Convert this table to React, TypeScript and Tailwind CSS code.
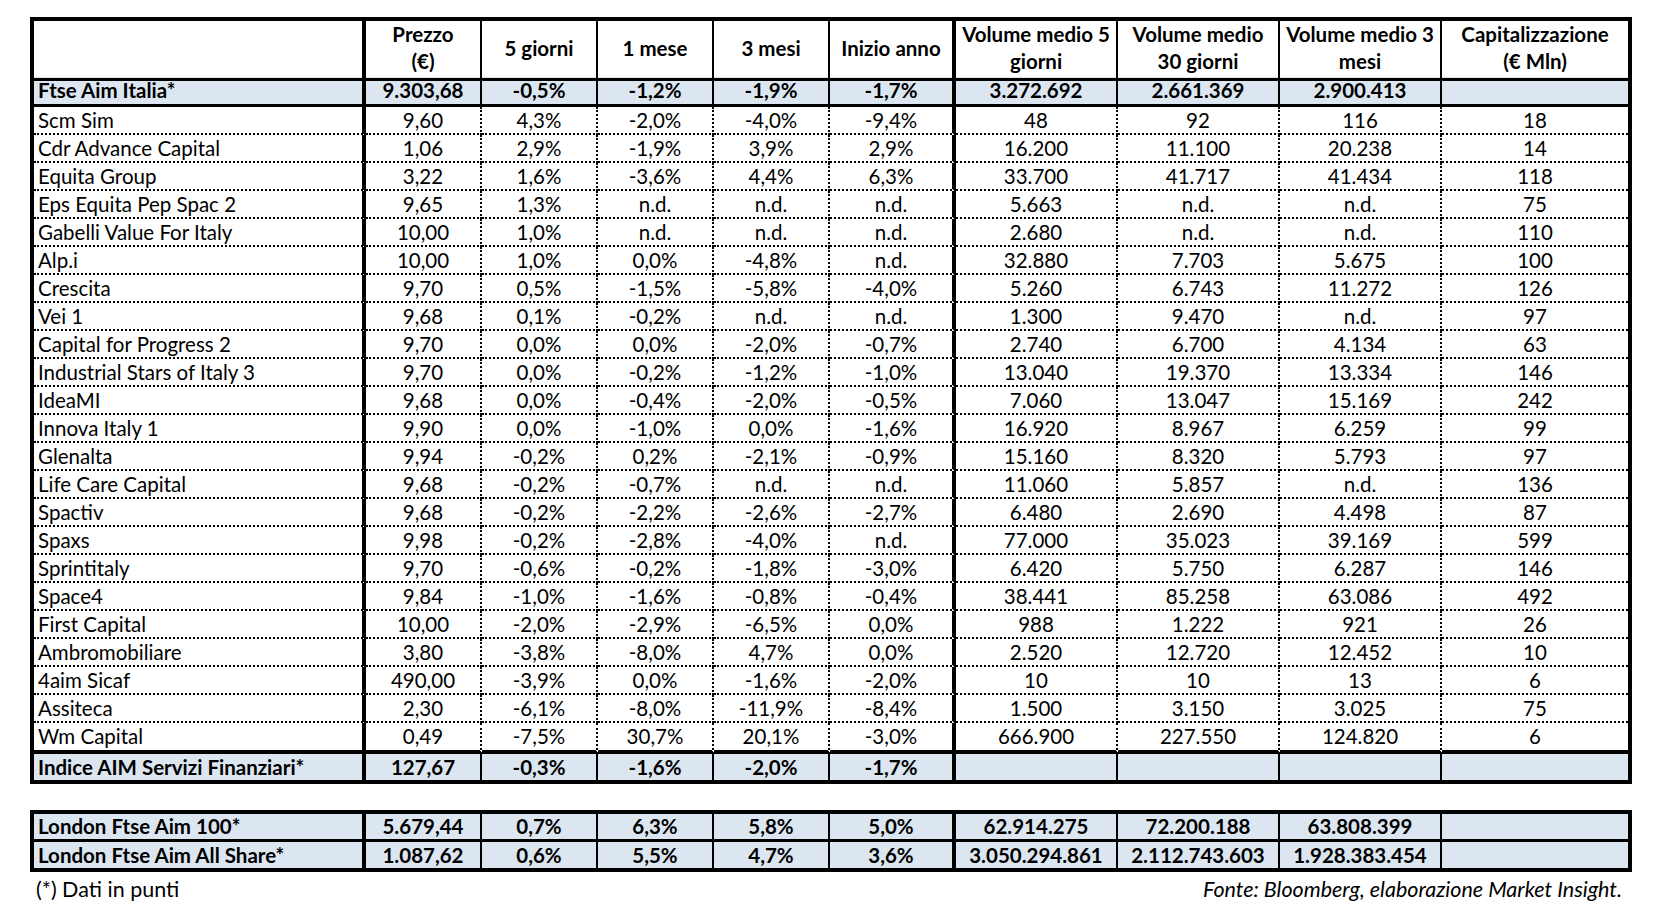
const COLS = 'grid grid-cols-[332px_116px_116px_116px_116px_126px_162px_162px_162px_186px]';

const header = [
    '',
    'Prezzo\n(€)',
    '5 giorni',
    '1 mese',
    '3 mesi',
    'Inizio anno',
    'Volume medio 5\ngiorni',
    'Volume medio\n30 giorni',
    'Volume medio 3\nmesi',
    'Capitalizzazione\n(€ Mln)',
];

const ftse = ['Ftse Aim Italia*', '9.303,68', '-0,5%', '-1,2%', '-1,9%', '-1,7%', '3.272.692', '2.661.369', '2.900.413', ''];

const rows = [
    ['Scm Sim', '9,60', '4,3%', '-2,0%', '-4,0%', '-9,4%', '48', '92', '116', '18'],
    ['Cdr Advance Capital', '1,06', '2,9%', '-1,9%', '3,9%', '2,9%', '16.200', '11.100', '20.238', '14'],
    ['Equita Group', '3,22', '1,6%', '-3,6%', '4,4%', '6,3%', '33.700', '41.717', '41.434', '118'],
    ['Eps Equita Pep Spac 2', '9,65', '1,3%', 'n.d.', 'n.d.', 'n.d.', '5.663', 'n.d.', 'n.d.', '75'],
    ['Gabelli Value For Italy', '10,00', '1,0%', 'n.d.', 'n.d.', 'n.d.', '2.680', 'n.d.', 'n.d.', '110'],
    ['Alp.i', '10,00', '1,0%', '0,0%', '-4,8%', 'n.d.', '32.880', '7.703', '5.675', '100'],
    ['Crescita', '9,70', '0,5%', '-1,5%', '-5,8%', '-4,0%', '5.260', '6.743', '11.272', '126'],
    ['Vei 1', '9,68', '0,1%', '-0,2%', 'n.d.', 'n.d.', '1.300', '9.470', 'n.d.', '97'],
    ['Capital for Progress 2', '9,70', '0,0%', '0,0%', '-2,0%', '-0,7%', '2.740', '6.700', '4.134', '63'],
    ['Industrial Stars of Italy 3', '9,70', '0,0%', '-0,2%', '-1,2%', '-1,0%', '13.040', '19.370', '13.334', '146'],
    ['IdeaMI', '9,68', '0,0%', '-0,4%', '-2,0%', '-0,5%', '7.060', '13.047', '15.169', '242'],
    ['Innova Italy 1', '9,90', '0,0%', '-1,0%', '0,0%', '-1,6%', '16.920', '8.967', '6.259', '99'],
    ['Glenalta', '9,94', '-0,2%', '0,2%', '-2,1%', '-0,9%', '15.160', '8.320', '5.793', '97'],
    ['Life Care Capital', '9,68', '-0,2%', '-0,7%', 'n.d.', 'n.d.', '11.060', '5.857', 'n.d.', '136'],
    ['Spactiv', '9,68', '-0,2%', '-2,2%', '-2,6%', '-2,7%', '6.480', '2.690', '4.498', '87'],
    ['Spaxs', '9,98', '-0,2%', '-2,8%', '-4,0%', 'n.d.', '77.000', '35.023', '39.169', '599'],
    ['Sprintitaly', '9,70', '-0,6%', '-0,2%', '-1,8%', '-3,0%', '6.420', '5.750', '6.287', '146'],
    ['Space4', '9,84', '-1,0%', '-1,6%', '-0,8%', '-0,4%', '38.441', '85.258', '63.086', '492'],
    ['First Capital', '10,00', '-2,0%', '-2,9%', '-6,5%', '0,0%', '988', '1.222', '921', '26'],
    ['Ambromobiliare', '3,80', '-3,8%', '-8,0%', '4,7%', '0,0%', '2.520', '12.720', '12.452', '10'],
    ['4aim Sicaf', '490,00', '-3,9%', '0,0%', '-1,6%', '-2,0%', '10', '10', '13', '6'],
    ['Assiteca', '2,30', '-6,1%', '-8,0%', '-11,9%', '-8,4%', '1.500', '3.150', '3.025', '75'],
    ['Wm Capital', '0,49', '-7,5%', '30,7%', '20,1%', '-3,0%', '666.900', '227.550', '124.820', '6'],
];

const indice = ['Indice AIM Servizi Finanziari*', '127,67', '-0,3%', '-1,6%', '-2,0%', '-1,7%', '', '', '', ''];

const london = [
    ['London Ftse Aim 100*', '5.679,44', '0,7%', '6,3%', '5,8%', '5,0%', '62.914.275', '72.200.188', '63.808.399', ''],
    ['London Ftse Aim All Share*', '1.087,62', '0,6%', '5,5%', '4,7%', '3,6%', '3.050.294.861', '2.112.743.603', '1.928.383.454', ''],
];

type Kind = 'solid' | 'dotted';

// vertical separator for column i; thick after the name and after "Inizio anno"
function sideCls(i: number, kind: Kind) {
    if (i === 0 || i === 5) return 'border-r-4 [border-right-style:solid]';
    if (i === 9) return '';
    if (kind === 'dotted') return 'border-r-2 [border-right-style:dotted]';
    return 'border-r-2 [border-right-style:solid]';
}

function Row({
    cells,
    height,
    bottom,
    kind,
    bold,
    shaded,
}: {
    cells: string[];
    height: string;
    bottom: string;
    kind: Kind;
    bold?: boolean;
    shaded?: boolean;
}) {
    return (
        <div className={`${COLS} ${height} ${shaded ? 'bg-[#dce6f1]' : 'bg-white'} ${bold ? 'font-bold' : ''}`}>
            {cells.map((c, i) => (
                <div
                    key={i}
                    className={`flex items-center border-black ${bottom} ${sideCls(i, kind)} ${
                        i === 0 ? 'justify-start pl-[4px]' : 'justify-center'
                    } whitespace-nowrap`}
                >
                    {c}
                </div>
            ))}
        </div>
    );
}

export default function App() {
    return (
        <div className="min-h-screen bg-white text-black font-['Lato',sans-serif] text-[20.5px] leading-none">
            <div className="pl-[30px] pt-[17px]">
                <div className="w-[1602px] border-4 border-black">
                    <div className={`${COLS} h-[56px] font-bold`}>
                        {header.map((h, i) => (
                            <div
                                key={i}
                                className={`flex items-center justify-center pb-[3px] text-center whitespace-pre-line leading-[27px] border-black border-b-[3px] [border-bottom-style:solid] ${sideCls(i, 'solid')}`}
                            >
                                {h}
                            </div>
                        ))}
                    </div>
                    <Row
                        cells={ftse}
                        height="h-[30px]"
                        bottom="border-b-[3px] [border-bottom-style:solid]"
                        kind="solid"
                        bold
                        shaded
                    />
                    {rows.map((r, idx) => (
                        <Row
                            key={r[0]}
                            cells={r}
                            height={idx === rows.length - 1 ? 'h-[31px]' : 'h-[28px]'}
                            bottom={
                                idx === rows.length - 1
                                    ? 'border-b-4 [border-bottom-style:solid]'
                                    : 'border-b-2 [border-bottom-style:dotted]'
                            }
                            kind="dotted"
                        />
                    ))}
                    <Row cells={indice} height="h-[26px]" bottom="" kind="solid" bold shaded />
                </div>

                <div className="mt-[26px] w-[1602px] border-4 border-black">
                    <Row
                        cells={london[0]}
                        height="h-[28px]"
                        bottom="border-b-[3px] [border-bottom-style:solid]"
                        kind="solid"
                        bold
                        shaded
                    />
                    <Row cells={london[1]} height="h-[26px]" bottom="" kind="solid" bold shaded />
                </div>

                <div className="w-[1602px] flex justify-between items-end h-[28px] text-[21.5px]">
                    <span className="pl-[6px]">(*) Dati in punti</span>
                    <span className="pr-[10px] italic">Fonte: Bloomberg, elaborazione Market Insight.</span>
                </div>
            </div>
        </div>
    );
}
